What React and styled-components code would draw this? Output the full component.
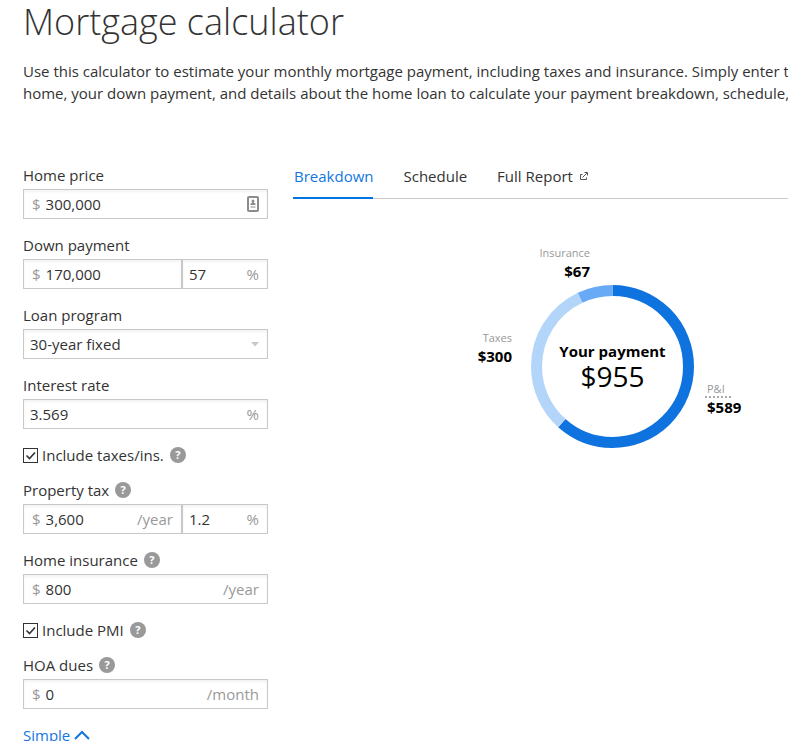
import React, { useId, useState } from "react";
import styled, { createGlobalStyle } from "styled-components";

const GlobalStyle = createGlobalStyle`
  *, *::before, *::after { box-sizing: border-box; }
  body {
    margin: 0;
    background: #fff;
    color: #333;
    font: 15px/22px "Open Sans", "Noto Sans", sans-serif;
  }
  button, input, select { font: inherit; color: inherit; }
`;

const Page = styled.div`
  padding: 0 0 0 23px;
  overflow: hidden;
`;

const Title = styled.h1`
  margin: 0;
  font-size: 36px;
  line-height: 44px;
  font-weight: 300;
`;

const Intro = styled.p`
  margin: 16px 0 57px;
  white-space: nowrap;
`;

const Calculator = styled.main`
  display: grid;
  grid-template-columns: 245px minmax(0, 1fr);
  column-gap: 25px;
  align-items: start;
`;

const Form = styled.form`
  display: flex;
  flex-direction: column;
`;

const Field = styled.div`
  margin-bottom: 12px;
`;

const LabelRow = styled.div`
  display: flex;
  align-items: center;
  gap: 6px;
  height: 28px;
`;

const Inputs = styled.div`
  display: grid;
  grid-template-columns: ${(p) => (p.$split ? "159px 1fr" : "1fr")};
`;

const InputBox = styled.div`
  display: flex;
  align-items: center;
  gap: 5px;
  min-width: 0;
  height: 30px;
  padding: 0 8px 0 ${(p) => (p.$money ? 8 : 6)}px;
  border: 1px solid #c8c8c8;
  box-shadow: inset 0 2px 3px #f3f3f3;
`;

const TextInput = styled.input`
  flex: 1;
  width: 0;
  min-width: 0;
  padding: 0;
  border: 0;
  outline: 0;
  background: transparent;
`;

const Unit = styled.span`
  color: #999;
`;

const SelectBox = styled(InputBox)`
  position: relative;
  padding: 0;
`;

const Select = styled.select`
  appearance: none;
  width: 100%;
  height: 28px;
  padding: 0 30px 0 6px;
  border: 0;
  outline: 0;
  background: transparent;
`;

const Caret = styled.svg`
  position: absolute;
  right: 8px;
  top: 12px;
  pointer-events: none;
`;

const CheckRow = styled.div`
  display: flex;
  align-items: center;
  gap: 6px;
  height: 28px;
  margin-bottom: 7px;
`;

const CheckLabel = styled.label`
  display: flex;
  align-items: center;
  gap: 4px;
`;

const CheckBoxFrame = styled.span`
  display: grid;
  width: 15px;
  height: 15px;

  > * { grid-area: 1 / 1; }
  > svg { pointer-events: none; visibility: hidden; }
  > input:checked + svg { visibility: visible; }
`;

const Checkbox = styled.input`
  appearance: none;
  width: 15px;
  height: 15px;
  margin: 0;
  border: 1px solid #333;
`;

const HelpButton = styled.button`
  width: 16px;
  height: 16px;
  padding: 0;
  border: 0;
  border-radius: 50%;
  background: #999;
  color: #fff;
  font-size: 11px;
  line-height: 16px;
  font-weight: 700;
  text-align: center;
`;

const SimpleLink = styled.a`
  display: flex;
  align-items: center;
  gap: 4px;
  height: 28px;
  color: #1277e1;
  text-decoration: none;
`;

const Tabs = styled.nav`
  display: flex;
  gap: 29px;
  height: 38px;
  box-shadow: inset 0 -1px #c8c8c8;
`;

const Tab = styled.a`
  display: flex;
  align-items: center;
  gap: 7px;
  height: 38px;
  padding: 0 0 6px 1px;
  border-bottom: 2px solid ${(p) => (p.$active ? "#0074e4" : "transparent")};
  color: ${(p) => (p.$active ? "#1277e1" : "#333")};
  text-decoration: none;
`;

const Chart = styled.figure`
  display: grid;
  grid-template-columns: 1fr 163px 1fr;
  grid-template-rows: 36px 163px;
  row-gap: 5px;
  min-width: 639px;
  margin: 45px 0 0;
`;

const Part = styled.div`
  display: flex;
  flex-direction: column;
  align-items: ${(p) => (p.$at === "right" ? "flex-start" : "flex-end")};
  line-height: 18px;
  ${(p) => p.$at === "top" && "grid-area: 1 / 2; padding-right: 104px; white-space: nowrap;"}
  ${(p) => p.$at === "left" && "grid-area: 2 / 1; padding: 44px 19px 0 0;"}
  ${(p) => p.$at === "right" && "grid-area: 2 / 3; padding: 95px 0 0 11px;"}
`;

const PartName = styled.span`
  color: #999;
  font-size: 11px;
`;

const PartHint = styled.abbr`
  height: 18px;
  padding: 0 6px 0 2px;
  border-bottom: 2px dotted #aaa;
  color: #999;
  font-size: 11px;
  text-decoration: none;
`;

const PartValue = styled.strong`
  padding-left: ${(p) => (p.$inset ? 2 : 0)}px;
  color: #000;
  font-size: 15px;
  font-weight: 700;
`;

const Donut = styled.svg`
  grid-area: 2 / 2;
`;

const Total = styled.figcaption`
  grid-area: 2 / 2;
  align-self: center;
  padding-bottom: 2px;
  color: #000;
  text-align: center;
`;

const TotalName = styled.div`
  font-size: 15px;
  line-height: 20px;
  font-weight: 700;
`;

const TotalValue = styled.div`
  font-size: 28px;
  line-height: 30px;
`;

const Help = ({ about }) => (
  <HelpButton type="button" aria-label={`Help: ${about}`}>?</HelpButton>
);

function ContactIcon() {
  return (
    <svg width="12" height="16" viewBox="0 0 12 16" aria-hidden="true">
      <rect x="1" y="1" width="10" height="14" rx="1" fill="#fff" stroke="#8c8c8c" strokeWidth="2" />
      <circle cx="6" cy="5" r="1.5" fill="#8c8c8c" />
      <path d="M5 5h2v2l1.5.5V9h-5V7.5L5 7z" fill="#8c8c8c" />
      <path d="M3.5 11h5" stroke="#8c8c8c" />
    </svg>
  );
}

function Amount({ id, label, value, prefix, suffix, icon }) {
  const [text, setText] = useState(value);
  return (
    <InputBox $money={!!prefix}>
      {prefix && <Unit>{prefix}</Unit>}
      <TextInput id={id} aria-label={label} value={text} onChange={(e) => setText(e.target.value)} />
      {suffix && <Unit>{suffix}</Unit>}
      {icon}
    </InputBox>
  );
}

function AmountField({ label, help, percent, ...amount }) {
  const id = useId();
  return (
    <Field>
      <LabelRow>
        <label htmlFor={id}>{label}</label>
        {help && <Help about={label} />}
      </LabelRow>
      <Inputs $split={!!percent}>
        <Amount id={id} {...amount} />
        {percent && <Amount label={`${label} percent`} value={percent} suffix="%" />}
      </Inputs>
    </Field>
  );
}

function CheckField({ label }) {
  return (
    <CheckRow>
      <CheckLabel>
        <CheckBoxFrame>
          <Checkbox type="checkbox" defaultChecked />
          <svg width="15" height="15" viewBox="0 0 15 15" aria-hidden="true">
            <path d="M3.5 7.5l3 3 5.500-6" fill="none" stroke="#333" strokeWidth="1.6" />
          </svg>
        </CheckBoxFrame>
        {label}
      </CheckLabel>
      <Help about={label} />
    </CheckRow>
  );
}

const SEGMENTS = [
  { value: 589, color: "#0f73df" },
  { value: 300, color: "#b3d5fa" },
  { value: 67, color: "#68aaf5" },
];
const SUM = SEGMENTS.reduce((sum, s) => sum + s.value, 0);

function DonutChart() {
  let start = 0;
  return (
    <Donut width="163" height="163" viewBox="0 0 163 163" aria-hidden="true">
      <g transform="rotate(-90 81.5 81.5)" fill="none" strokeWidth="11">
        {SEGMENTS.map(({ value, color }) => {
          const offset = -start;
          start += value;
          return (
            <circle
              key={color}
              cx="81.5"
              cy="81.5"
              r="76"
              pathLength={SUM}
              stroke={color}
              strokeDasharray={`${value} ${SUM - value}`}
              strokeDashoffset={offset}
            />
          );
        })}
      </g>
    </Donut>
  );
}

export default function App() {
  return (
    <>
      <GlobalStyle />
      <Page>
        <Title>Mortgage calculator</Title>
        <Intro>
          Use this calculator to estimate your monthly mortgage payment, including taxes and insurance. Simply enter the
          <br />
          home, your down payment, and details about the home loan to calculate your payment breakdown, schedule,
        </Intro>
        <Calculator>
          <Form>
            <AmountField label="Home price" prefix="$" value="300,000" icon={<ContactIcon />} />
            <AmountField label="Down payment" prefix="$" value="170,000" percent="57" />
            <Field>
              <LabelRow>
                <label htmlFor="program">Loan program</label>
              </LabelRow>
              <SelectBox>
                <Select id="program">
                  <option>30-year fixed</option>
                </Select>
                <Caret width="8" height="5" viewBox="0 0 8 5" aria-hidden="true">
                  <path d="M0 0h8L4 4.5z" fill="#c8c8c8" />
                </Caret>
              </SelectBox>
            </Field>
            <AmountField label="Interest rate" value="3.569" suffix="%" />
            <CheckField label="Include taxes/ins." />
            <AmountField label="Property tax" help prefix="$" value="3,600" suffix="/year" percent="1.2" />
            <AmountField label="Home insurance" help prefix="$" value="800" suffix="/year" />
            <CheckField label="Include PMI" />
            <AmountField label="HOA dues" help prefix="$" value="0" suffix="/month" />
            <SimpleLink href="#simple">
              Simple
              <svg width="16" height="10" viewBox="0 0 16 10" aria-hidden="true">
                <path d="M1 9l7-7 7 7" fill="none" stroke="#1277e1" strokeWidth="2" />
              </svg>
            </SimpleLink>
          </Form>
          <section>
            <Tabs>
              <Tab href="#breakdown" $active aria-current="page">Breakdown</Tab>
              <Tab href="#schedule">Schedule</Tab>
              <Tab href="#report">
                Full Report
                <svg width="8" height="8" viewBox="0 0 8 8" fill="none" stroke="#555" aria-hidden="true">
                  <path d="M2.5 2.5H.5v5h6v-2M2.5 5.5L7 1M4.5.5h3v3" />
                </svg>
              </Tab>
            </Tabs>
            <Chart>
              <Part $at="top">
                <PartName>Insurance</PartName>
                <PartValue>$67</PartValue>
              </Part>
              <Part $at="left">
                <PartName>Taxes</PartName>
                <PartValue>$300</PartValue>
              </Part>
              <DonutChart />
              <Total>
                <TotalName>Your payment</TotalName>
                <TotalValue>$955</TotalValue>
              </Total>
              <Part $at="right">
                <PartHint title="Principal and interest">P&amp;I</PartHint>
                <PartValue $inset>$589</PartValue>
              </Part>
            </Chart>
          </section>
        </Calculator>
      </Page>
    </>
  );
}
